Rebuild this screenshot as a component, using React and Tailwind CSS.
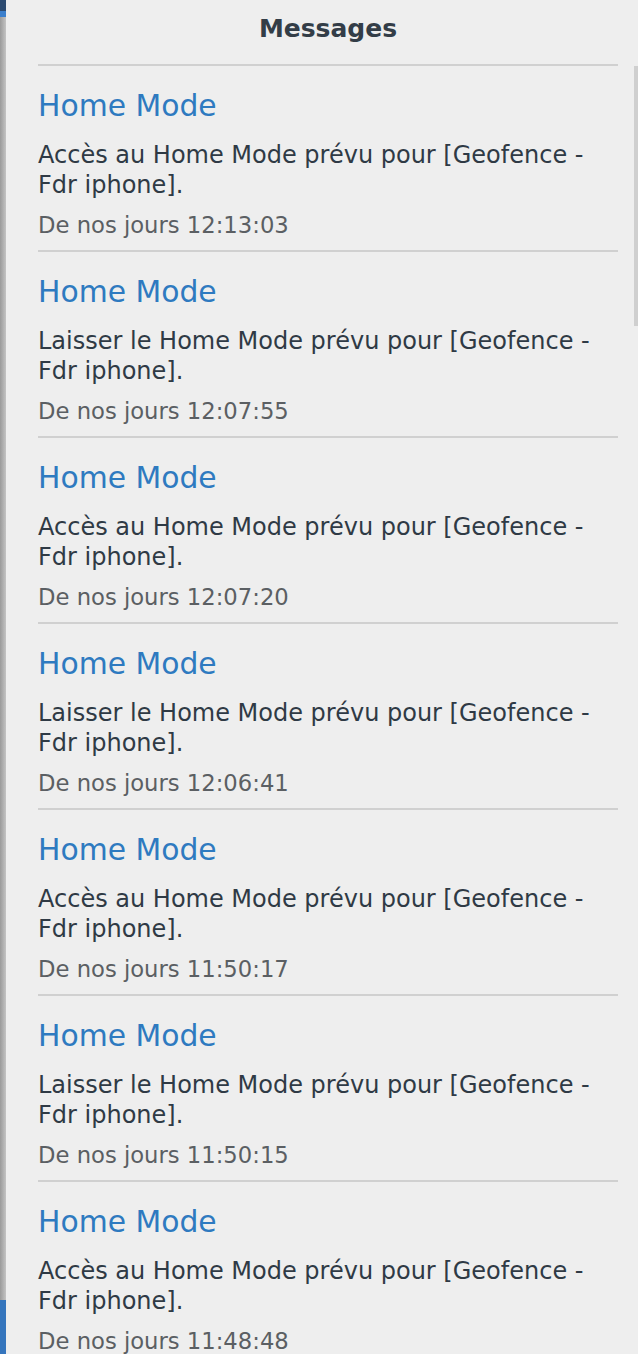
const messages = [
  { text: 'Accès au Home Mode prévu pour [Geofence - Fdr iphone].', time: '12:13:03' },
  { text: 'Laisser le Home Mode prévu pour [Geofence - Fdr iphone].', time: '12:07:55' },
  { text: 'Accès au Home Mode prévu pour [Geofence - Fdr iphone].', time: '12:07:20' },
  { text: 'Laisser le Home Mode prévu pour [Geofence - Fdr iphone].', time: '12:06:41' },
  { text: 'Accès au Home Mode prévu pour [Geofence - Fdr iphone].', time: '11:50:17' },
  { text: 'Laisser le Home Mode prévu pour [Geofence - Fdr iphone].', time: '11:50:15' },
  { text: 'Accès au Home Mode prévu pour [Geofence - Fdr iphone].', time: '11:48:48' },
]

export default function App() {
  return (
    <div
      className="relative flex h-[1354px] w-full overflow-hidden bg-[#eeeeee]"
      style={{ fontFamily: '"DejaVu Sans", Verdana, sans-serif' }}
    >
      {/* left edge of the window behind */}
      <div className="flex w-[6px] shrink-0 flex-col">
        <div className="h-[11px] bg-[#2c4a70]"></div>
        <div className="h-[6px] bg-[#3b7fcc]"></div>
        <div className="flex-1 bg-gradient-to-r from-[#9a9a9a] to-[#c4c4c4]"></div>
        <div className="h-[54px] bg-[#3575bd]"></div>
      </div>

      <div className="flex-1 pl-[32px] pr-[20px]">
        <div className="border-b-2 border-[#d0d0d0] pt-[14px] pb-[20px] text-center">
          <h2 className="text-[25px] font-bold leading-[30px] text-[#333d47]">Messages</h2>
        </div>

        {messages.map((m, i) => (
          <div key={i} className="border-b-2 border-[#d0d0d0] pt-[22px] pb-[10px]">
            <div className="text-[29.8px] leading-[36px] text-[#2e7ac0]">Home Mode</div>
            <p className="mt-[16px] text-[24px] leading-[30px] text-[#2f3a45]">{m.text}</p>
            <div className="mt-[10px] text-[22.7px] leading-[30px] text-[#5b5f63]">
              De nos jours {m.time}
            </div>
          </div>
        ))}
      </div>

      {/* scrollbar */}
      <div className="absolute right-0 top-[66px] h-[260px] w-[4px] bg-[#cfcfcf]"></div>
    </div>
  )
}
